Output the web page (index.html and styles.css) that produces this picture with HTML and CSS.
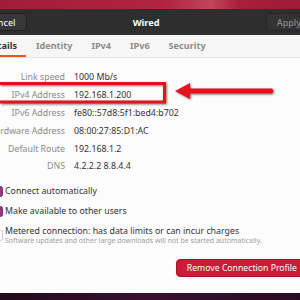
FILE: index.html
```html
<!DOCTYPE html>
<html lang="en">

<head>
    <meta charset="UTF-8">
    <meta name="viewport" content="width=device-width, initial-scale=1.0">
    <title>Wired</title>

    <link rel="stylesheet" href="styles.css">
</head>

<body>
    <div class="wallpaper top"></div>

    <div class="window">
        <div class="headerbar">
            <button class="hbtn">Cancel</button>
            <div class="title">Wired</div>
            <button class="hbtn disabled">Apply</button>
        </div>

        <div class="tabs">
            <div class="tab active">Details</div>
            <div class="tab">Identity</div>
            <div class="tab">IPv4</div>
            <div class="tab">IPv6</div>
            <div class="tab">Security</div>
        </div>

        <div class="details">
            <div class="label">Link speed</div>
            <div class="value">1000 Mb/s</div>
            <div class="label">IPv4 Address</div>
            <div class="value">192.168.1.200</div>
            <div class="label">IPv6 Address</div>
            <div class="value">fe80::57d8:5f1:bed4:b702</div>
            <div class="label">Hardware Address</div>
            <div class="value">08:00:27:85:D1:AC</div>
            <div class="label">Default Route</div>
            <div class="value">192.168.1.2</div>
            <div class="label">DNS</div>
            <div class="value">4.2.2.2 8.8.4.4</div>
        </div>

        <div class="options">
            <div class="check-row">
                <span class="box checked"></span>
                <span>Connect automatically</span>
            </div>
            <div class="check-row">
                <span class="box checked"></span>
                <span>Make available to other users</span>
            </div>
            <div class="check-row metered">
                <span class="box"></span>
                <div>
                    <div>Metered connection: has data limits or can incur charges</div>
                    <div class="hint">Software updates and other large downloads will not be started automatically.</div>
                </div>
            </div>
        </div>

        <div class="footer">
            <button class="remove">Remove Connection Profile</button>
        </div>
    </div>

    <div class="wallpaper bottom"></div>

    <!-- annotation drawn on top of the screenshot -->
    <svg class="markup" width="300" height="300" viewBox="0 0 300 300">
        <rect x="-10" y="83.5" width="174.5" height="18.5" fill="none" stroke="#e3141c" stroke-width="3" />
        <path d="M272 88.5 L190 88.5 L190 83 L175 91 L190 99 L190 93.5 L272 93.5 Q274.5 91 272 88.5 Z" fill="#e3141c" />
    </svg>
</body>

</html>
```

FILE: styles.css
```css
body {
    margin: 0;
    width: 300px;
    height: 300px;
    overflow: hidden;
    position: relative;
    background: #2a0b22;
    font-family: "Noto Sans", "DejaVu Sans", sans-serif;
    font-size: 8.8px;
    color: #3d3d3d;
}

.wallpaper.top {
    height: 9px;
    background: linear-gradient(100deg, #a01d3a 0%, #b0243f 55%, #c0465a 70%, #a81f3b 80%, #9c1b37 100%);
}

.wallpaper.bottom {
    height: 7px;
    background: linear-gradient(90deg, #230a1c, #3a1030 50%, #2a0c22);
}

.window {
    margin-left: -40px;
    width: 380px;
    height: 284px;
    display: flex;
    flex-direction: column;
    background: #fcfcfc;
}

.headerbar {
    flex: none;
    height: 26px;
    background: #2e2e2e;
    display: flex;
    align-items: center;
    justify-content: space-between;
    padding: 0 28px 0 16px;
}

.hbtn {
    height: 18px;
    padding: 0 10px;
    background: #373737;
    border: 1px solid #202020;
    border-radius: 4px;
    color: #eeeeee;
    font-family: inherit;
    font-size: 9px;
    font-weight: 500;
}

.hbtn.disabled {
    color: #8a8a8a;
    background: #333333;
    border-color: #262626;
}

.title {
    color: #ffffff;
    font-weight: bold;
    font-size: 9.2px;
}

.tabs {
    flex: none;
    height: 22px;
    display: flex;
    padding-left: 16px;
    background: #f6f6f6;
    border-bottom: 1px solid #e4e4e4;
}

.tab {
    padding: 0 9.5px;
    line-height: 21px;
    font-weight: bold;
    font-size: 9.1px;
    color: #8c8c8c;
    border-bottom: 2px solid transparent;
}

.tab.active {
    color: #333333;
    border-bottom-color: #e95420;
}

.details {
    display: grid;
    grid-template-columns: 105px 1fr;
    column-gap: 9px;
    grid-auto-rows: 17.8px;
    align-items: center;
    padding-top: 10.5px;
}

.label {
    text-align: right;
    white-space: nowrap;
    color: #8a8a8a;
}

.value {
    white-space: nowrap;
    color: #333333;
}

.options {
    padding: 6.7px 0 0 32px;
}

.check-row {
    display: flex;
    align-items: center;
    gap: 2px;
    height: 20px;
    line-height: 11px;
    color: #333333;
}

.check-row.metered {
    height: auto;
    margin-top: 4px;
}

.box {
    flex: none;
    width: 11px;
    height: 11px;
    border-radius: 2.5px;
    border: 1px solid #c8c8c8;
    background: #ffffff;
    box-sizing: border-box;
}

.box.checked {
    background: #8b3d82;
    border-color: #7a2f72;
}

.hint {
    font-size: 7px;
    line-height: 8.5px;
    color: #a0a0a0;
}

.footer {
    flex: 1;
    display: flex;
    justify-content: flex-end;
    align-items: flex-start;
    padding: 13.5px 32px 0 0;
}

.remove {
    height: 18px;
    padding: 0 10px;
    background: #cd1a36;
    border: 1px solid #a5122a;
    border-radius: 4px;
    color: #ffffff;
    font-family: inherit;
    font-size: 8.7px;
}

.markup {
    position: absolute;
    left: 0;
    top: 0;
    filter: drop-shadow(1.5px 1.5px 1px rgba(40, 0, 0, 0.55));
}
```
